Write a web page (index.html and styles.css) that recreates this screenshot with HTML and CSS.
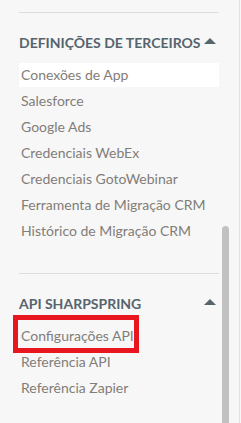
FILE: index.html
```html
<!DOCTYPE html>
<html lang="pt">
<head>
    <meta charset="UTF-8">
    <title>Configurações</title>
    <link rel="stylesheet" href="styles.css">
</head>
<body>
    <div class="sidebar">
        <div class="section">
            <div class="section-title">
                <span>DEFINIÇÕES DE TERCEIROS</span>
                <span class="caret"></span>
            </div>
            <a class="nav-item active" href="#">Conexões de App</a>
            <a class="nav-item" href="#">Salesforce</a>
            <a class="nav-item" href="#">Google Ads</a>
            <a class="nav-item" href="#">Credenciais WebEx</a>
            <a class="nav-item" href="#">Credenciais GotoWebinar</a>
            <a class="nav-item" href="#">Ferramenta de Migração CRM</a>
            <a class="nav-item" href="#">Histórico de Migração CRM</a>
        </div>

        <div class="section">
            <div class="section-title">
                <span>API SHARPSPRING</span>
                <span class="caret"></span>
            </div>
            <a class="nav-item marked" href="#">Configurações API</a>
            <a class="nav-item" href="#">Referência API</a>
            <a class="nav-item" href="#">Referência Zapier</a>
        </div>

        <div class="scroll-thumb"></div>
    </div>
</body>
</html>
```

FILE: styles.css
```css
:root {
    --bg-color: #f7f7f7;
    --title-color: #56646d;
    --text-color: #827d78;
    --line-color: #dcdcdc;
}

* {
    margin: 0;
    padding: 0;
    box-sizing: border-box;
}

body {
    font-family: 'Lato', 'Liberation Sans', sans-serif;
    background-color: var(--bg-color);
    width: 241px;
    height: 423px;
    overflow: hidden;
}

.sidebar {
    position: relative;
    height: 423px;
    padding: 12px 0 0 19px;
    border-right: 1px solid #e2e2e2;
    width: 240px;
}

.section {
    width: 200px;
    border-top: 1px solid var(--line-color);
    padding: 20px 0 30px;
    display: flex;
    flex-direction: column;
    gap: 2px;
}

.section-title {
    display: flex;
    align-items: center;
    justify-content: space-between;
    font-size: 14px;
    font-weight: bold;
    line-height: 20px;
    color: var(--title-color);
    margin-bottom: 8px;
}

/* small up arrow next to the titles */
.caret {
    width: 0;
    height: 0;
    margin-right: 3px;
    margin-top: -4px;
    border-left: 6px solid transparent;
    border-right: 6px solid transparent;
    border-bottom: 6px solid var(--title-color);
}

.nav-item {
    display: block;
    height: 24px;
    line-height: 24px;
    padding-left: 2px;
    font-size: 14px;
    color: var(--text-color);
    text-decoration: none;
}

.nav-item.active {
    background-color: #fff;
}

.nav-item.marked {
    position: relative;
}

.nav-item.marked:after {
    content: "";
    box-sizing: border-box;
    position: absolute;
    left: -6px;
    top: -9px;
    width: 126px;
    height: 38px;
    border: 5px solid #e8161f;
}

.scroll-thumb {
    position: absolute;
    left: 222px;
    top: 226px;
    width: 7px;
    height: 210px;
    background-color: #c1c1c1;
    border-radius: 4px 4px 0 0;
}
```
